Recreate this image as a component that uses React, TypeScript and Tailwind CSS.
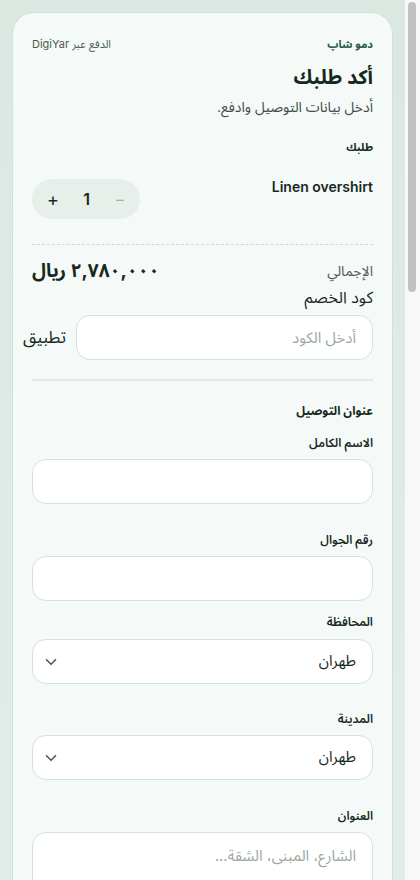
import React from 'react';
import { ChevronDown, ShieldCheck } from 'lucide-react';

const font = { fontFamily: 'Inter, Roboto, "Noto Sans Arabic", "Noto Sans", sans-serif' };

const inputCls =
  'h-[45px] w-full rounded-[14px] border border-[#d3e4db] bg-white px-4 text-[15px] text-[#17291f] outline-none placeholder:text-[#9aa8a1]';

const Label: React.FC<{ children: React.ReactNode; className?: string }> = ({ children, className = '' }) => (
  <label className={`block text-[12px] font-semibold leading-4 text-[#17291f] ${className}`}>{children}</label>
);

const SelectBox: React.FC<{ value: string }> = ({ value }) => (
  <div className="flex h-[45px] w-full items-center justify-between rounded-[14px] border border-[#d3e4db] bg-white pr-4 pl-[9px]">
    <span className="text-[15px] text-[#17291f]">{value}</span>
    <ChevronDown size={18} strokeWidth={2.2} className="text-[#55595a]" />
  </div>
);

const PayOption: React.FC<{ title: string; desc: string; active?: boolean }> = ({ title, desc, active }) => (
  <div
    className={`flex items-center gap-3 rounded-[14px] border px-4 py-4 ${
      active ? 'border-[#1f5a44] bg-[#eaf3ee]' : 'border-[#d3e4db] bg-white'
    }`}
  >
    <span
      className={`flex h-5 w-5 items-center justify-center rounded-full border-2 ${
        active ? 'border-[#1f5a44]' : 'border-[#b9cbc2]'
      }`}
    >
      {active && <span className="h-2.5 w-2.5 rounded-full bg-[#1f5a44]" />}
    </span>
    <div className="flex-1">
      <div className="text-[14px] font-semibold text-[#17291f]">{title}</div>
      <div className="mt-1 text-[12px] text-[#5d6b64]">{desc}</div>
    </div>
  </div>
);

export default function App() {
  return (
    <div dir="ltr" style={font} className="flex h-screen">
      <main
        dir="rtl"
        className="flex-1 overflow-y-auto bg-gradient-to-b from-[#dbe8e1] to-[#e3ede8] [scrollbar-width:none]"
      >
        <div className="p-3">
          <div className="rounded-[22px] border border-[#cfe2d8] bg-[#f5f9f7] px-[19px] pt-[23px] pb-10">
            <div className="flex items-center justify-between leading-4">
              <span className="text-[11px] font-bold text-[#1f5a44]">دمو شاپ</span>
              <span className="text-[11px] text-[#4b5a53]">الدفع عبر DigiYar</span>
            </div>

            <h1 className="mt-[11px] text-[20px] font-bold leading-7 text-[#17291f]">أكد طلبك</h1>
            <p className="mt-[6px] text-[14px] leading-5 text-[#3f4d46]">أدخل بيانات التوصيل وادفع.</p>

            <h2 className="mt-[22px] text-[11px] font-bold leading-4 text-[#17291f]">طلبك</h2>

            <div className="mt-[24px] flex items-start justify-between">
              <span className="text-[14px] font-semibold leading-4 text-[#17291f]">Linen overshirt</span>
              <div className="flex h-10 w-[108px] items-center justify-between rounded-full bg-[#e6efea] px-[15px]">
                <button className="text-[16px] text-[#a3b0aa]">−</button>
                <span className="text-[16px] font-semibold text-[#17291f]">1</span>
                <button className="text-[18px] text-[#17291f]">+</button>
              </div>
            </div>

            <div className="mt-[25px] border-t border-dashed border-[#cddad3]" />

            <div className="mt-3 flex items-center justify-between leading-7">
              <span className="text-[14px] text-[#4b5a53]">الإجمالي</span>
              <span className="text-[19px] font-bold text-[#17291f]">٢,٧٨٠,٠٠٠ ريال</span>
            </div>

            <div className="text-[16px] leading-6 text-[#17291f]">كود الخصم</div>
            <div className="mt-[6px] -ml-2 flex items-center gap-[10px]">
              <input className={inputCls + ' flex-1'} placeholder="أدخل الكود" />
              <button className="w-[42px] shrink-0 text-[17px] text-[#17291f]">تطبيق</button>
            </div>

            <div className="mt-[19px] h-[2px] bg-[#e0ebe5]" />

            <h2 className="mt-[22px] text-[12px] font-bold leading-4 text-[#17291f]">عنوان التوصيل</h2>

            <Label className="mt-4">الاسم الكامل</Label>
            <input className={inputCls + ' mt-2'} />

            <Label className="mt-7">رقم الجوال</Label>
            <input className={inputCls + ' mt-2'} />

            <Label className="mt-[13px]">المحافظة</Label>
            <div className="mt-[9px]">
              <SelectBox value="طهران" />
            </div>

            <Label className="mt-[27px]">المدينة</Label>
            <div className="mt-2">
              <SelectBox value="طهران" />
            </div>

            <Label className="mt-7">العنوان</Label>
            <textarea
              className="mt-2 block h-[110px] w-full resize-none rounded-[14px] border border-[#d3e4db] bg-white px-4 py-3 text-[15px] outline-none placeholder:text-[#9aa8a1]"
              placeholder="الشارع، المبنى، الشقة..."
            />

            <Label className="mt-7">الرمز البريدي</Label>
            <input className={inputCls + ' mt-2'} placeholder="اختياري" />

            <Label className="mt-7">ملاحظات الطلب</Label>
            <textarea
              className="mt-2 block h-[110px] w-full resize-none rounded-[14px] border border-[#d3e4db] bg-white px-4 py-3 text-[15px] outline-none placeholder:text-[#9aa8a1]"
              placeholder="أي تعليمات إضافية للتوصيل"
            />

            <div className="mt-8 h-[2px] bg-[#e0ebe5]" />

            <h2 className="mt-6 text-[12px] font-bold text-[#17291f]">طريقة الشحن</h2>
            <div className="mt-4 space-y-3">
              <PayOption title="شحن عادي" desc="٣-٥ أيام عمل — مجاناً" active />
              <PayOption title="شحن سريع" desc="١-٢ يوم عمل — ١٥٠,٠٠٠ ريال" />
              <PayOption title="استلام من المتجر" desc="متاح خلال ٢٤ ساعة" />
            </div>

            <div className="mt-8 h-[2px] bg-[#e0ebe5]" />

            <h2 className="mt-6 text-[12px] font-bold text-[#17291f]">طريقة الدفع</h2>
            <div className="mt-4 space-y-3">
              <PayOption title="بطاقة بنكية" desc="الدفع الآمن عبر بوابة DigiYar" active />
              <PayOption title="محفظة DigiYar" desc="ادفع من رصيد محفظتك" />
              <PayOption title="الدفع عند الاستلام" desc="نقداً عند وصول الطلب" />
            </div>

            <div className="mt-8 rounded-[16px] border border-[#d3e4db] bg-white p-4">
              <div className="flex justify-between text-[14px] text-[#4b5a53]">
                <span>المجموع الفرعي</span>
                <span>٢,٧٨٠,٠٠٠ ريال</span>
              </div>
              <div className="mt-3 flex justify-between text-[14px] text-[#4b5a53]">
                <span>الشحن</span>
                <span>مجاناً</span>
              </div>
              <div className="mt-3 flex justify-between text-[14px] text-[#4b5a53]">
                <span>الخصم</span>
                <span>٠ ريال</span>
              </div>
              <div className="mt-4 flex justify-between border-t border-dashed border-[#cddad3] pt-4 text-[16px] font-bold text-[#17291f]">
                <span>الإجمالي</span>
                <span>٢,٧٨٠,٠٠٠ ريال</span>
              </div>
            </div>

            <label className="mt-6 flex items-start gap-2 text-[13px] text-[#3f4d46]">
              <input type="checkbox" className="mt-1 h-4 w-4" />
              <span>أوافق على الشروط والأحكام وسياسة الإرجاع الخاصة بالمتجر.</span>
            </label>

            <button className="mt-6 h-[52px] w-full rounded-[14px] bg-[#1f5a44] text-[16px] font-bold text-white">
              ادفع ٢,٧٨٠,٠٠٠ ريال
            </button>

            <div className="mt-5 flex items-center justify-center gap-2 text-[12px] text-[#5d6b64]">
              <ShieldCheck size={16} />
              <span>دفع آمن ومشفر عبر DigiYar</span>
            </div>

            <div className="mt-10 space-y-2 text-center text-[12px] text-[#7a8781]">
              <p>هل تحتاج مساعدة؟ تواصل مع دعم دمو شاپ</p>
              <p>الشروط والأحكام · سياسة الخصوصية · سياسة الإرجاع</p>
            </div>

            <div className="h-[360px]" />
          </div>
        </div>
      </main>

      {/* scrollbar track, as the reference shows it */}
      <aside className="w-[15px] shrink-0 bg-[#f8f8f8] pt-[2px] pl-[3px]">
        <div className="h-[290px] w-[8px] rounded-full bg-[#c1c1c1]" />
      </aside>
    </div>
  );
}
